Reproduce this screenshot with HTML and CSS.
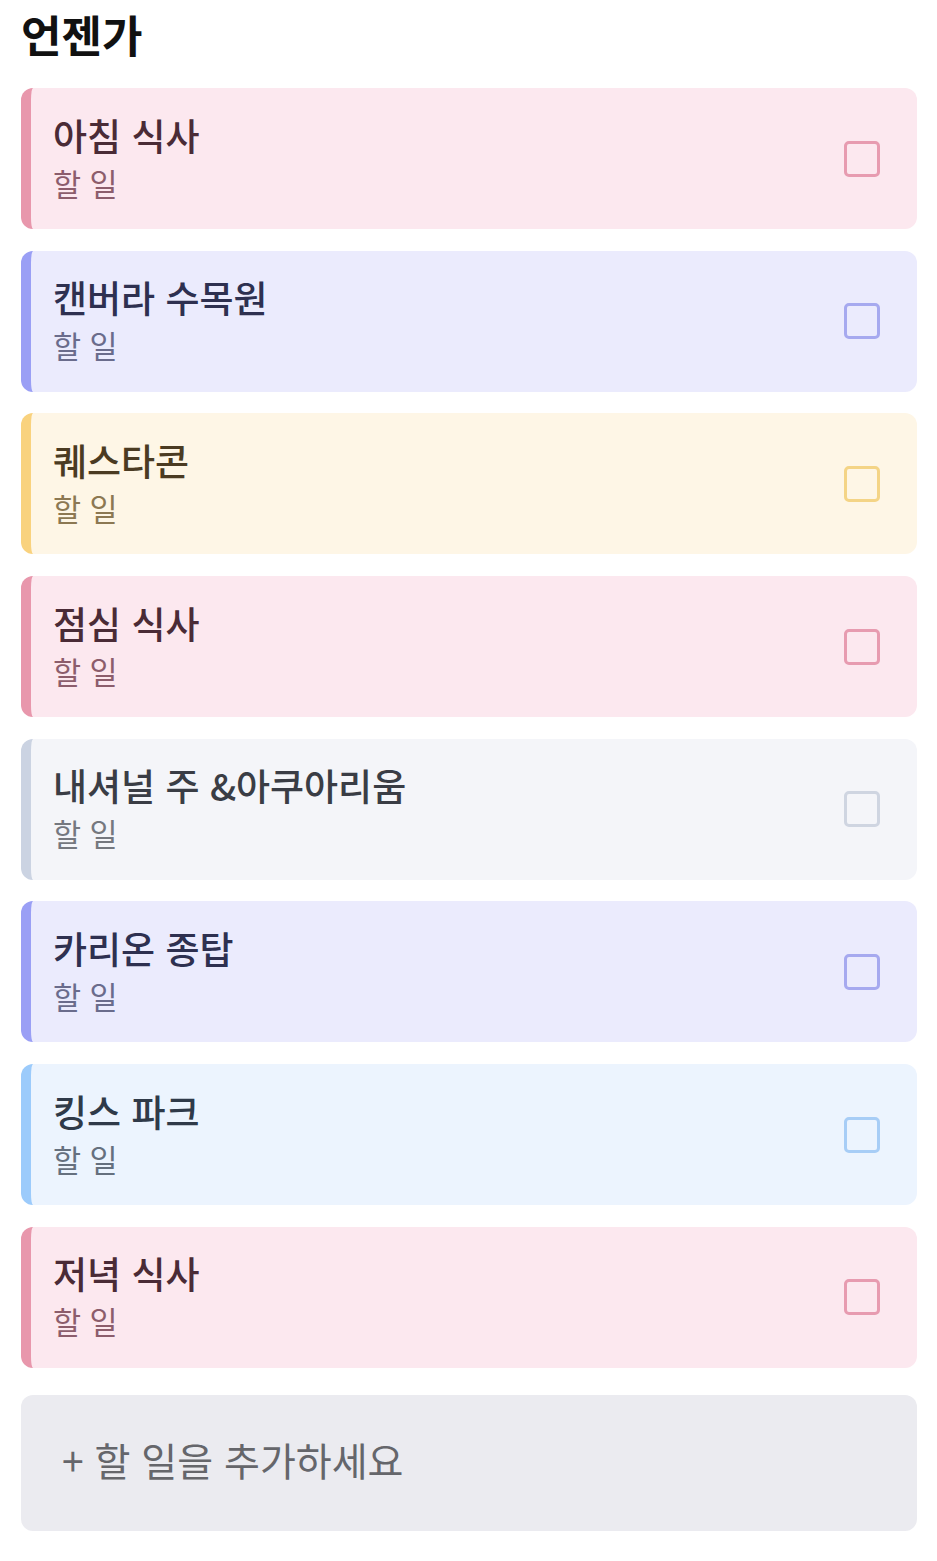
FILE: index.html
```html
<!DOCTYPE html>
<html lang="ko">
<head>
  <meta charset="utf-8">
  <title>언젠가</title>
  <link rel="stylesheet" href="styles.css">
</head>
<body>
  <h1 class="heading">언젠가</h1>

  <div class="list">
    <div class="task pink">
      <div class="task-text">
        <div class="task-title">아침 식사</div>
        <div class="task-sub">할 일</div>
      </div>
      <span class="check"></span>
    </div>
    <div class="task violet">
      <div class="task-text">
        <div class="task-title">캔버라 수목원</div>
        <div class="task-sub">할 일</div>
      </div>
      <span class="check"></span>
    </div>
    <div class="task yellow">
      <div class="task-text">
        <div class="task-title">퀘스타콘</div>
        <div class="task-sub">할 일</div>
      </div>
      <span class="check"></span>
    </div>
    <div class="task pink">
      <div class="task-text">
        <div class="task-title">점심 식사</div>
        <div class="task-sub">할 일</div>
      </div>
      <span class="check"></span>
    </div>
    <div class="task slate">
      <div class="task-text">
        <div class="task-title">내셔널 주 &amp;아쿠아리움</div>
        <div class="task-sub">할 일</div>
      </div>
      <span class="check"></span>
    </div>
    <div class="task violet">
      <div class="task-text">
        <div class="task-title">카리온 종탑</div>
        <div class="task-sub">할 일</div>
      </div>
      <span class="check"></span>
    </div>
    <div class="task sky">
      <div class="task-text">
        <div class="task-title">킹스 파크</div>
        <div class="task-sub">할 일</div>
      </div>
      <span class="check"></span>
    </div>
    <div class="task pink">
      <div class="task-text">
        <div class="task-title">저녁 식사</div>
        <div class="task-sub">할 일</div>
      </div>
      <span class="check"></span>
    </div>
  </div>

  <div class="add-task">+ 할 일을 추가하세요</div>
</body>
</html>
```

FILE: styles.css
```css
body { margin: 0; padding: 0 20px 30px 21px; font-family: "Noto Sans CJK KR", "Noto Sans", sans-serif; background: #fff; }
.heading { margin: 4px 0 0 0; font-size: 44px; line-height: 60px; font-weight: 700; color: #111; }
.list { display: flex; flex-direction: column; gap: 21.7px; margin-top: 24px; }

.task { display: flex; align-items: center; justify-content: space-between; height: 141px; box-sizing: border-box; padding: 0 37px 0 22px; border-left: 10px solid; border-radius: 12px; }
.task-text { display: flex; flex-direction: column; margin-top: -4px; }
.task-title { font-size: 37px; line-height: 46px; font-weight: 500; }
.task-sub { font-size: 30.5px; line-height: 38px; margin-top: 6px; }
.check { width: 30px; height: 30px; border: 3px solid; border-radius: 5px; }

.pink { background: #fce8ef; border-color: #e897ac; }
.pink .task-title { color: #4a2b36; }
.pink .task-sub { color: #8c5d6c; }
.pink .check { border-color: #e79bb0; }

.violet { background: #ebebfd; border-color: #9a9ff5; }
.violet .task-title { color: #2e3050; }
.violet .task-sub { color: #6a6c8c; }
.violet .check { border-color: #a6a9ef; }

.yellow { background: #fef6e6; border-color: #f9d27e; }
.yellow .task-title { color: #4b3b22; }
.yellow .task-sub { color: #8c7852; }
.yellow .check { border-color: #f4d486; }

.slate { background: #f4f5f9; border-color: #cbd3e2; }
.slate .task-title { color: #3a3d45; }
.slate .task-sub { color: #75787f; }
.slate .check { border-color: #cfd5e1; }

.sky { background: #ecf4fe; border-color: #9ccbfb; }
.sky .task-title { color: #2f3a49; }
.sky .task-sub { color: #65707e; }
.sky .check { border-color: #a7cdf6; }

.add-task { margin-top: 27px; height: 136px; box-sizing: border-box; display: flex; align-items: center; padding: 0 0 8px 41px; background: #ebebf0; border-radius: 12px; font-size: 39px; color: #65666b; }
```
